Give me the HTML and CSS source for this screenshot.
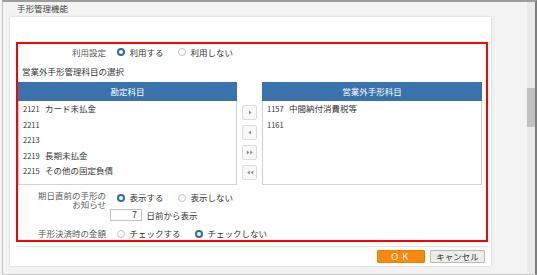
FILE: index.html
```html
<!DOCTYPE html>
<html lang="ja">
<head>
<meta charset="utf-8">
<title>手形管理機能</title>
<link rel="stylesheet" href="styles.css">
</head>
<body>
<div class="window">
  <div class="main">
    <div class="title">手形管理機能</div>
    <div class="panel">
      <div class="settings">
        <div class="row row-use">
          <div class="label">利用設定</div>
          <div class="radios">
            <label class="opt"><span class="radio on"></span>利用する</label>
            <label class="opt"><span class="radio"></span>利用しない</label>
          </div>
        </div>
        <div class="section">営業外手形管理科目の選択</div>
        <div class="picker">
          <div class="list list-left">
            <div class="list-head">勘定科目</div>
            <div class="list-body">
              <div class="item"><span class="code">2121</span>カード未払金</div>
              <div class="item"><span class="code">2211</span></div>
              <div class="item"><span class="code">2213</span></div>
              <div class="item"><span class="code">2219</span>長期未払金</div>
              <div class="item"><span class="code">2215</span>その他の固定負債</div>
            </div>
          </div>
          <div class="moves">
            <button class="mv" type="button"><svg width="6" height="5" viewBox="0 0 6 5"><path d="M2 0.5 L4.5 2.5 L2 4.5Z" fill="#8a8a8a"/></svg></button>
            <button class="mv" type="button"><svg width="6" height="5" viewBox="0 0 6 5"><path d="M4 0.5 L1.5 2.5 L4 4.5Z" fill="#8a8a8a"/></svg></button>
            <button class="mv" type="button"><svg width="8" height="5" viewBox="0 0 8 5"><path d="M0.8 0.5 L3.3 2.5 L0.8 4.5Z M4.2 0.5 L6.7 2.5 L4.2 4.5Z" fill="#8a8a8a"/></svg></button>
            <button class="mv" type="button"><svg width="8" height="5" viewBox="0 0 8 5"><path d="M3.8 0.5 L1.3 2.5 L3.8 4.5Z M7.2 0.5 L4.7 2.5 L7.2 4.5Z" fill="#8a8a8a"/></svg></button>
          </div>
          <div class="list list-right">
            <div class="list-head">営業外手形科目</div>
            <div class="list-body">
              <div class="item"><span class="code">1157</span>中間納付消費税等</div>
              <div class="item"><span class="code">1161</span></div>
            </div>
          </div>
        </div>
        <div class="row row-notify">
          <div class="label label-2">期日直前の手形の<br>お知らせ</div>
          <div class="radios">
            <label class="opt"><span class="radio on"></span>表示する</label>
            <label class="opt"><span class="radio"></span>表示しない</label>
          </div>
        </div>
        <div class="days"><span class="input">7</span><span class="days-text">日前から表示</span></div>
        <div class="row row-check">
          <div class="label">手形決済時の金額</div>
          <div class="radios">
            <label class="opt"><span class="radio"></span>チェックする</label>
            <label class="opt"><span class="radio on"></span>チェックしない</label>
          </div>
        </div>
      </div>
      <div class="footer">
        <button class="btn ok" type="button">ＯＫ</button>
        <button class="btn cancel" type="button">キャンセル</button>
      </div>
    </div>
  </div>
  <div class="scrollbar"><div class="thumb"></div></div>
</div>
</body>
</html>
```

FILE: styles.css
```css
* { box-sizing: border-box; }
html, body { margin: 0; padding: 0; }
body {
  background: #f3f3f3;
  font-family: "Noto Sans CJK JP", "Noto Sans", sans-serif;
  font-size: 8.5px;
  color: #333;
}
.window {
  margin-left: 2px;
  width: 535px;
  height: 275px;
  border-top: 2px solid #9c9c9c;
  border-left: 1px solid #c4c4c4;
  border-right: 2px solid #7e7e7e;
  border-bottom: 1px solid #cdcdcd;
  background: #f3f3f3;
  display: flex;
}
.main { flex: 1; }
.title {
  height: 12px;
  line-height: 12px;
  padding-left: 14px;
  color: #444;
}
.panel {
  margin: 3px 0 0 7px;
  width: 481px;
  height: 249px;
  background: #fff;
  box-shadow: 0 0 2px rgba(0,0,0,0.18);
  padding: 25px 3px 0 6px;
}
.settings {
  width: 472px;
  height: 200px;
  border: 2px solid #ff0000;
  padding-right: 4px;
}
.row { display: flex; align-items: flex-start; }
.label {
  width: 88px;
  flex: none;
  text-align: right;
  color: #5a5a5a;
}
.row-use { height: 16px; align-items: center; }
.row-use .label { line-height: 16px; }
.radios {
  display: flex;
  align-items: center;
  gap: 14.5px;
  margin-left: 11px;
}
.opt { display: flex; align-items: center; line-height: 13px; white-space: nowrap; }
.radio {
  width: 8px;
  height: 8px;
  border-radius: 50%;
  border: 1px solid #c4c4c4;
  background: #fff;
  margin-right: 4.5px;
  flex: none;
}
.radio.on { border: 2.5px solid #2d6bb0; }
.section {
  margin-top: 3px;
  height: 16px;
  line-height: 16px;
  padding-left: 4px;
  color: #333;
}
.picker {
  margin-top: 3px;
  display: flex;
  align-items: flex-start;
}
.list { display: flex; flex-direction: column; }
.list-left { width: 219px; }
.list-right { width: 220px; }
.list-head {
  height: 19px;
  line-height: 19px;
  background: #3a72ab;
  color: #fff;
  text-align: center;
}
.list-body {
  height: 84px;
  border: 1px solid #d2d2d2;
  border-top: none;
  padding: 0 0 0 4px;
}
.item {
  height: 15.6px;
  line-height: 15.6px;
  display: flex;
  white-space: nowrap;
}
.code { width: 22px; flex: none; font-size: 7.5px; }
.moves {
  width: 25px;
  padding: 23px 0 0 5px;
  display: flex;
  flex-direction: column;
  gap: 5px;
}
.mv {
  width: 15px;
  height: 15px;
  padding: 0;
  margin: 0;
  border: 1px solid #dcdcdc;
  border-radius: 2px;
  background: #f8f8f8;
  display: flex;
  align-items: center;
  justify-content: center;
}
.mv svg { display: block; }
.row-notify { margin-top: 6px; height: 18px; }
.label-2 { line-height: 9px; }
.row-notify .radios { height: 13px; }
.days {
  display: flex;
  align-items: center;
  height: 12px;
  padding-left: 92px;
}
.input {
  width: 32px;
  height: 12px;
  border: 1px solid #c2c2c2;
  text-align: right;
  padding-right: 4px;
  line-height: 10px;
  font-size: 9px;
  background: #fff;
}
.days-text { margin-left: 4.5px; }
.row-check { margin-top: 6px; height: 13px; align-items: center; }
.row-check .label { line-height: 13px; }
.footer {
  margin-top: 4px;
  width: 472px;
  border-top: 1px solid #e6e6e6;
  padding-top: 3px;
  display: flex;
  justify-content: flex-end;
  gap: 5px;
  padding-right: 3px;
}
.btn {
  height: 13px;
  padding: 0;
  margin: 0;
  font-family: "Noto Sans CJK JP", sans-serif;
  font-size: 8.5px;
  line-height: 11px;
  border-radius: 1px;
}
.ok {
  width: 48px;
  background: #f7890d;
  border: 1px solid #f08000;
  color: #fff;
  letter-spacing: 2px;
}
.cancel {
  width: 55px;
  background: #ececec;
  border: 1px solid #b8b8b8;
  color: #333;
}
.scrollbar {
  width: 8px;
  background: #ebebeb;
  padding-top: 86px;
}
.thumb {
  height: 39px;
  background: #c1c1c1;
}
```
